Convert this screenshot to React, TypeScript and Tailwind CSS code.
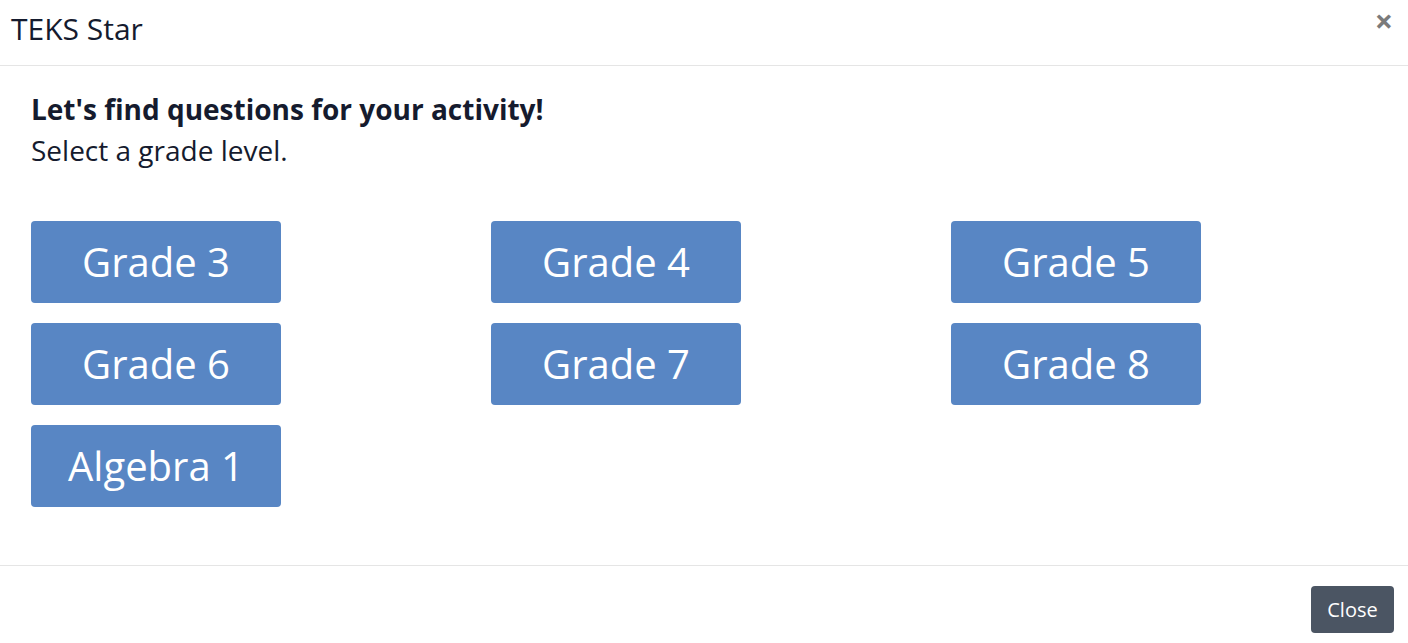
const grades = ["Grade 3", "Grade 4", "Grade 5", "Grade 6", "Grade 7", "Grade 8", "Algebra 1"];

export default function App() {
  return (
    <div className="w-[1408px] h-[643px] bg-white text-[#151b2e] flex flex-col" style={{ fontFamily: '"Open Sans", sans-serif' }}>
      <div className="h-[66px] border-b border-[#e5e5e5] flex items-start justify-between shrink-0">
        <div className="pl-[11px] pt-[9px] text-[30px] leading-[40px]">TEKS Star</div>
        <button className="mr-[15px] mt-[6px] text-[#7b7b7b] text-[32px] font-bold leading-[30px]">×</button>
      </div>
      <div className="flex-1 pl-[31px] pt-[23px]">
        <div className="text-[28px] font-bold leading-[40px]">Let's find questions for your activity!</div>
        <div className="text-[28px] leading-[40px] mt-[1px]">Select a grade level.</div>
        <div className="grid grid-cols-[repeat(3,460px)] gap-y-[20px] mt-[51px]">
          {grades.map((g) => (
            <button
              key={g}
              className="w-[250px] h-[82px] rounded-[4px] bg-[#5886c4] text-white text-[40px] leading-none flex items-center justify-center"
            >
              {g}
            </button>
          ))}
        </div>
      </div>
      <div className="h-[78px] border-t border-[#e5e5e5] flex items-start justify-end shrink-0">
        <button className="mt-[20px] mr-[14px] w-[83px] h-[47px] rounded-[4px] bg-[#4b5563] text-white text-[20px] leading-[43px]">Close</button>
      </div>
    </div>
  );
}
